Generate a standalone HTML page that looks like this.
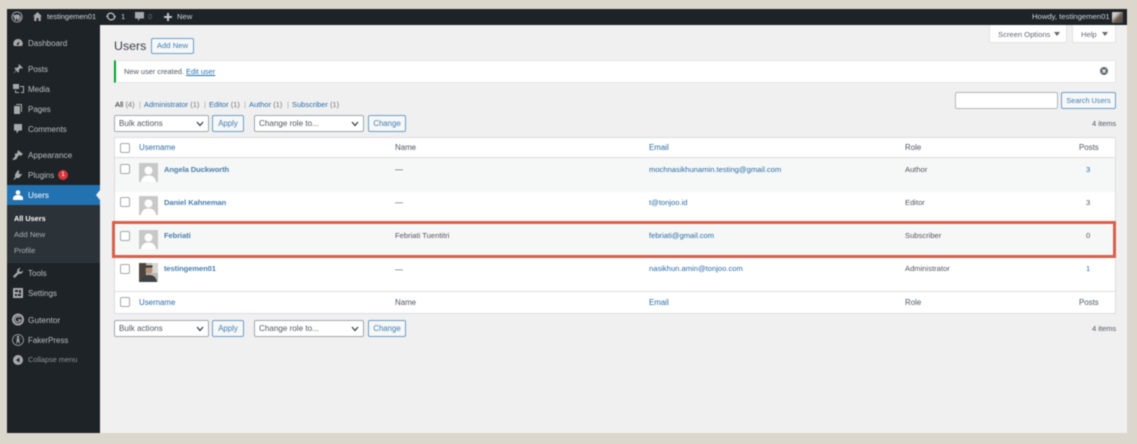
<!DOCTYPE html>
<html><head><meta charset="utf-8">
<style>
html,body{margin:0;padding:0}
body{width:1137px;height:444px;background:#dcd7cc;position:relative;overflow:hidden;font-family:"Liberation Sans",sans-serif;font-size:8px;color:#50575e}
#w{position:absolute;left:0;top:0;width:1137px;height:444px;filter:blur(.45px)}
.a{position:absolute}
.t{position:absolute;white-space:nowrap;line-height:12px}
.l{color:#2a6ea6}
.m{color:#bcbec1;font-size:8px}
.cur{color:#fff;font-weight:bold}
.s{color:#a9adb2}
.cb{position:absolute;width:8px;height:8px;border:1px solid #a5a7aa;border-radius:2px;background:#fff}
.btn{position:absolute;box-sizing:border-box;border:1px solid #6c9ec7;border-radius:2px;background:#f6f7f7;color:#3f7fb5;text-align:center;font-size:7.8px;height:17px;line-height:15px}
.sel{position:absolute;box-sizing:border-box;border:1px solid #a5a7aa;border-radius:2px;background:#fff;color:#50575e;font-size:8.1px;height:17px;line-height:15px;padding-left:4px}
.sel svg{position:absolute;right:4px;top:5px}
.av{position:absolute;width:19px;height:19px;background:#c8c8c8;overflow:hidden}
.ic{position:absolute;fill:#a7aaad}
.b{font-size:7.6px;font-weight:bold;letter-spacing:-.1px;color:#4a81ae}
.c{font-size:7.6px}
.h{font-size:7.9px}
</style></head><body><div id="w">
<!-- main -->
<div class="a" style="left:7px;top:9px;width:1120px;height:424px;background:#f0f0f1"></div>
<!-- sidebar -->
<div class="a" style="left:7px;top:25px;width:93px;height:408px;background:#1d2327"></div>
<div class="a" style="left:7px;top:185px;width:93px;height:20px;background:#2271b1"></div>
<div class="a" style="left:7px;top:205px;width:93px;height:58px;background:#2c3338"></div>
<svg class="a" style="left:96px;top:190px" width="4" height="10"><path d="M4 0L0 5L4 10Z" fill="#f0f0f1"/></svg>
<!-- admin bar -->
<div class="a" style="left:7px;top:9px;width:1120px;height:16px;background:#1d2327"></div>
<svg class="a" style="left:11px;top:11px" width="12" height="12" viewBox="0 0 12 12"><circle cx="6" cy="6" r="5.5" fill="#a7aaad"/><circle cx="6" cy="6" r="4.6" fill="#1d2327"/><path d="M2 4L4.4 10.2 5.5 7 4.4 4ZM4.5 4L7 10.4 8.8 5 8 3.6H4.5ZM9.2 4.4L8 10C9.8 9 10.6 6.5 9.2 4.4Z" fill="#a7aaad"/></svg>
<svg class="ic" style="left:33px;top:12px" width="9" height="9" viewBox="0 0 9 9"><path d="M4.5 0L9 4.4H7.8V9H5.5V6H3.5V9H1.2V4.4H0Z"/></svg>
<span class="t" style="left:47px;top:11px;color:#d5d7d9;font-size:7.5px">testingemen01</span>
<svg class="a" style="left:106px;top:12px" width="10" height="9" viewBox="0 0 10 9"><path d="M1.2 4.5A3.5 3.5 0 0 1 8 3.5M8.8 4.5A3.5 3.5 0 0 1 2 5.5" fill="none" stroke="#c3c4c7" stroke-width="1.3"/><path d="M0 4H3L1.2 6ZM10 5H7L8.8 3Z" fill="#c3c4c7"/></svg>
<span class="t" style="left:121px;top:11px;color:#d5d7d9;font-size:7.6px">1</span>
<svg class="ic" style="left:135px;top:12px" width="9" height="10" viewBox="0 0 9 10"><path d="M0 0H9V6.5H5L3 9V6.5H0Z"/></svg>
<span class="t" style="left:148px;top:11px;color:#6d7176;font-size:7.6px">0</span>
<svg class="ic" style="left:164px;top:13px" width="8" height="8" viewBox="0 0 8 8"><path d="M3 0H5V3H8V5H5V8H3V5H0V3H3Z" fill="#c3c4c7"/></svg>
<span class="t" style="left:177px;top:11px;color:#d5d7d9;font-size:7.6px">New</span>
<span class="t" style="left:1032px;top:11px;color:#d5d7d9;font-size:7.7px">Howdy, testingemen01</span>
<div class="a" style="left:1112px;top:12px;width:11px;height:11px;background:linear-gradient(135deg,#c9c9c5 30%,#6f5d50 55%,#3e4347)"></div>
<!-- sidebar icons -->
<svg class="ic" style="left:13px;top:38px" width="10" height="10" viewBox="0 0 10 10"><path d="M5 1A4.6 4.6 0 0 0 1 8H9A4.6 4.6 0 0 0 5 1ZM5 7A1 1 0 0 1 4.6 5L6.5 3 5.8 5.7A1 1 0 0 1 5 7Z"/></svg>
<span class="t m" style="left:28px;top:38px">Dashboard</span>
<svg class="ic" style="left:13px;top:64px" width="10" height="10" viewBox="0 0 10 10"><path d="M6 0L10 4 8.8 4.6 7.6 4 5.8 6 6 8 5 8.6 3.4 6.6 .5 9.5 0 9.8 3 6 1.4 4.6 2 3.6 4 3.9 6 2.2 5.4 1Z"/></svg>
<span class="t m" style="left:28px;top:64px">Posts</span>
<svg class="ic" style="left:13px;top:84px" width="11" height="10" viewBox="0 0 11 10"><path d="M0 0H6V5H0ZM7 2H11V9H8V8H10V3H7ZM2 6H3V8H6V9H2Z"/></svg>
<span class="t m" style="left:28px;top:84px">Media</span>
<svg class="ic" style="left:14px;top:104px" width="9" height="10" viewBox="0 0 9 10"><path d="M2 0H8V8H7V1H2ZM0 2H6V10H0Z"/></svg>
<span class="t m" style="left:28px;top:104px">Pages</span>
<svg class="ic" style="left:13px;top:124px" width="10" height="10" viewBox="0 0 10 10"><path d="M1 0H9V6.5H6L3.5 9.5V6.5H1Z"/></svg>
<span class="t m" style="left:28px;top:124px">Comments</span>
<svg class="ic" style="left:12px;top:150px" width="11" height="10" viewBox="0 0 11 10"><path d="M6 0L11 4 8.5 6 7 5 4 9.5 0 10 3 6.5 3 3.5 5 3.5Z"/></svg>
<span class="t m" style="left:28px;top:150px;font-size:8.2px">Appearance</span>
<svg class="ic" style="left:13px;top:170px" width="10" height="10" viewBox="0 0 10 10"><path d="M5 0L6.5 1.5 5.5 3 7 4.5 8.5 3.5 9 4.5 6 8H3L1.5 9.8 .5 9 2 7.3V4.5Z"/></svg>
<span class="t m" style="left:28px;top:170px">Plugins</span>
<div class="a" style="left:58px;top:170px;width:10px;height:10px;border-radius:50%;background:#d63638;color:#fff;font-size:6.5px;line-height:10px;text-align:center">1</div>
<svg class="a" style="left:13px;top:190px" width="10" height="10" viewBox="0 0 10 10"><circle cx="5" cy="2.5" r="2.3" fill="#fff"/><path d="M0 10V7.5C1 5.5 3 5 5 5S9 5.5 10 7.5V10Z" fill="#fff"/></svg>
<span class="t" style="left:28px;top:190px;color:#fff;font-size:8px">Users</span>
<span class="t cur" style="left:14px;top:213px;font-size:7.3px">All Users</span>
<span class="t s" style="left:14px;top:229px;font-size:7.7px">Add New</span>
<span class="t s" style="left:14px;top:245px;font-size:7.5px">Profile</span>
<svg class="ic" style="left:13px;top:268px" width="10" height="10" viewBox="0 0 10 10"><path d="M7 0A3 3 0 0 0 4.3 4L0 8.3 1.5 10 5.9 5.6A3 3 0 0 0 10 2.5L8.2 4 6.3 3.4 6 1.8 7.8 .2Z"/></svg>
<span class="t m" style="left:28px;top:268px">Tools</span>
<svg class="ic" style="left:13px;top:288px" width="10" height="10" viewBox="0 0 10 10"><path fill-rule="evenodd" d="M0 0H10V10H0ZM2 2V4H5V2ZM6 2V5H8V2ZM2 6V8H4V6ZM5 6V8H8V6Z"/></svg>
<span class="t m" style="left:28px;top:288px">Settings</span>
<svg class="a" style="left:12px;top:313px" width="12" height="13" viewBox="0 0 12 13"><circle cx="6" cy="6.5" r="5" fill="none" stroke="#a7aaad" stroke-width="2"/><path d="M8 4.5A2.8 2.8 0 1 0 8.6 7H6" fill="none" stroke="#a7aaad" stroke-width="1.2"/></svg>
<span class="t m" style="left:28px;top:314px;font-size:8.3px">Gutentor</span>
<svg class="a" style="left:12px;top:334px" width="12" height="12" viewBox="0 0 12 12"><circle cx="6" cy="6" r="5.5" fill="none" stroke="#a7aaad" stroke-width=".8"/><circle cx="6" cy="3" r="1.2" fill="#a7aaad"/><path d="M2 4.5L5 5 4 10.5 6 7.5 8 10.5 7 5 10 4.5" fill="#a7aaad"/></svg>
<span class="t m" style="left:28px;top:335px;font-size:7.9px">FakerPress</span>
<svg class="a" style="left:13px;top:355px" width="10" height="10" viewBox="0 0 10 10"><circle cx="5" cy="5" r="5" fill="#a7aaad"/><path d="M6.5 2.5V7.5L3 5Z" fill="#1d2327"/></svg>
<span class="t" style="left:28px;top:354px;color:#8e9397;font-size:7.4px">Collapse menu</span>
<!-- top tabs -->
<div class="a" style="left:989px;top:25px;width:78px;height:18px;background:#fff;border:1px solid #e2e2e4;border-top:0;box-sizing:border-box"></div>
<span class="t" style="left:998px;top:29px;color:#646970;font-size:7.6px">Screen Options</span>
<svg class="a" style="left:1054px;top:32px" width="6" height="4"><path d="M0 0H6L3 4Z" fill="#646970"/></svg>
<div class="a" style="left:1072px;top:25px;width:44px;height:18px;background:#fff;border:1px solid #e2e2e4;border-top:0;box-sizing:border-box"></div>
<span class="t" style="left:1081px;top:29px;color:#646970;font-size:7.6px">Help</span>
<svg class="a" style="left:1102px;top:32px" width="6" height="4"><path d="M0 0H6L3 4Z" fill="#646970"/></svg>
<!-- heading -->
<span class="t" style="left:114px;top:39px;font-size:12.4px;line-height:15px;color:#3a4046">Users</span>
<div class="btn" style="left:151px;top:38px;width:43px;height:16px;line-height:14px;font-size:7.7px">Add New</div>
<!-- notice -->
<div class="a" style="left:114px;top:60px;width:1002px;height:23px;background:#fff;border:1px solid #e4e4e6;border-left:2px solid #00a32a;box-sizing:border-box"></div>
<span class="t" style="left:124px;top:66px;font-size:7.4px">New user created. <span style="color:#2271b1;text-decoration:underline">Edit user</span></span>
<svg class="a" style="left:1100px;top:67px" width="8" height="8" viewBox="0 0 8 8"><circle cx="4" cy="4" r="4" fill="#646970"/><path d="M2.4 2.4L5.6 5.6M5.6 2.4L2.4 5.6" stroke="#fff" stroke-width="1"/></svg>
<!-- filters -->
<span class="t" style="left:115px;top:99px;font-size:7.5px"><span style="color:#1d2327">All</span> <span style="color:#777">(4)</span></span>
<span class="t" style="left:139px;top:99px;color:#aaa;font-size:7.5px">|</span>
<span class="t l" style="left:144px;top:99px;font-size:7.5px">Administrator <span style="color:#777">(1)</span></span>
<span class="t" style="left:204px;top:99px;color:#aaa;font-size:7.5px">|</span>
<span class="t l" style="left:209px;top:99px;font-size:7.5px">Editor <span style="color:#777">(1)</span></span>
<span class="t" style="left:244px;top:99px;color:#aaa;font-size:7.5px">|</span>
<span class="t l" style="left:249px;top:99px;font-size:7.5px">Author <span style="color:#777">(1)</span></span>
<span class="t" style="left:287px;top:99px;color:#aaa;font-size:7.5px">|</span>
<span class="t l" style="left:292px;top:99px;font-size:7.5px">Subscriber <span style="color:#777">(1)</span></span>
<!-- search -->
<div class="a" style="left:955px;top:92px;width:103px;height:17px;box-sizing:border-box;background:#fff;border:1px solid #b5b7ba;border-radius:2px"></div>
<div class="btn" style="left:1061px;top:92px;width:55px;font-size:7.3px">Search Users</div>
<span class="t" style="left:1092px;top:117.5px;font-size:7.5px">4 items</span>
<!-- top actions -->
<div class="sel" style="left:114px;top:115px;width:95px">Bulk actions<svg width="8" height="6" viewBox="0 0 8 6"><path d="M1 1L4 4.5L7 1" fill="none" stroke="#3c434a" stroke-width="1.3"/></svg></div>
<div class="btn" style="left:212px;top:115px;width:32px">Apply</div>
<div class="sel" style="left:254px;top:115px;width:110px">Change role to...<svg width="8" height="6" viewBox="0 0 8 6"><path d="M1 1L4 4.5L7 1" fill="none" stroke="#3c434a" stroke-width="1.3"/></svg></div>
<div class="btn" style="left:368px;top:115px;width:38px">Change</div>
<!-- table -->
<div class="a" style="left:114px;top:137px;width:1002px;height:177px;box-sizing:border-box;background:#fff;border:1px solid #dcdde0"></div>
<div class="a" style="left:115px;top:157px;width:1000px;height:1px;background:#dcdde0"></div>
<div class="a" style="left:115px;top:158px;width:1000px;height:34px;background:#f6f7f7"></div>
<div class="a" style="left:115px;top:225px;width:1000px;height:33px;background:#f6f7f7"></div>
<div class="a" style="left:115px;top:291px;width:1000px;height:1px;background:#dcdde0"></div>
<!-- header -->
<div class="cb" style="left:120px;top:143px"></div>
<span class="t l h" style="left:139px;top:142px">Username</span>
<span class="t h" style="left:395px;top:142px">Name</span>
<span class="t l h" style="left:649px;top:142px">Email</span>
<span class="t h" style="left:905px;top:142px">Role</span>
<span class="t h" style="left:1079px;top:142px">Posts</span>
<!-- rows -->
<div class="cb" style="left:120px;top:164px"></div>
<div class="av" style="left:139px;top:163px"><svg width="19" height="19"><circle cx="9.5" cy="7.5" r="4" fill="#fff"/><path d="M2 19C3 13 7 12.5 9.5 12.5S16 13 17 19Z" fill="#fff"/></svg></div>
<span class="t l b" style="left:164px;top:163.5px">Angela Duckworth</span>
<span class="t" style="left:395px;top:164px;font-size:8px">—</span>
<span class="t l c" style="left:649px;top:163.5px">mochnasikhunamin.testing@gmail.com</span>
<span class="t c" style="left:905px;top:163.5px">Author</span>
<span class="t l c" style="left:1086px;top:163.5px">3</span>

<div class="cb" style="left:120px;top:197px"></div>
<div class="av" style="left:139px;top:196px"><svg width="19" height="19"><circle cx="9.5" cy="7.5" r="4" fill="#fff"/><path d="M2 19C3 13 7 12.5 9.5 12.5S16 13 17 19Z" fill="#fff"/></svg></div>
<span class="t l b" style="left:164px;top:196.5px">Daniel Kahneman</span>
<span class="t" style="left:395px;top:197px;font-size:8px">—</span>
<span class="t l c" style="left:649px;top:196.5px">t@tonjoo.id</span>
<span class="t c" style="left:905px;top:196.5px">Editor</span>
<span class="t c" style="left:1086px;top:196.5px">3</span>

<div class="cb" style="left:120px;top:231px"></div>
<div class="av" style="left:139px;top:230px"><svg width="19" height="19"><circle cx="9.5" cy="7.5" r="4" fill="#fff"/><path d="M2 19C3 13 7 12.5 9.5 12.5S16 13 17 19Z" fill="#fff"/></svg></div>
<span class="t l b" style="left:164px;top:230px">Febriati</span>
<span class="t c" style="left:395px;top:230px">Febriati Tuentitri</span>
<span class="t l c" style="left:649px;top:230px">febriati@gmail.com</span>
<span class="t c" style="left:905px;top:230px">Subscriber</span>
<span class="t c" style="left:1086px;top:230px">0</span>

<div class="cb" style="left:120px;top:264px"></div>
<div class="av" style="left:139px;top:263px;background:#b9b5ae"><svg width="19" height="19"><rect width="7" height="19" fill="#4a4541"/><rect x="13" width="6" height="10" fill="#d8d6d0"/><circle cx="10" cy="7" r="3.6" fill="#b58f77"/><rect x="6.5" y="2.5" width="7" height="2" fill="#3a3633"/><path d="M2 19C3 13 7 12 10 12S17 13 18 19Z" fill="#3d4044"/></svg></div>
<span class="t l b" style="left:164px;top:263px">testingemen01</span>
<span class="t" style="left:395px;top:263.5px;font-size:8px">—</span>
<span class="t l c" style="left:649px;top:263px">nasikhun.amin@tonjoo.com</span>
<span class="t c" style="left:905px;top:263px">Administrator</span>
<span class="t l c" style="left:1086px;top:263px">1</span>
<!-- footer -->
<div class="cb" style="left:120px;top:297px"></div>
<span class="t l h" style="left:139px;top:297px">Username</span>
<span class="t h" style="left:395px;top:297px">Name</span>
<span class="t l h" style="left:649px;top:297px">Email</span>
<span class="t h" style="left:905px;top:297px">Role</span>
<span class="t h" style="left:1079px;top:297px">Posts</span>
<!-- highlight -->
<div class="a" style="left:112px;top:221px;width:1004px;height:37px;box-sizing:border-box;border:3.5px solid #d8604a"></div>
<!-- bottom actions -->
<div class="sel" style="left:114px;top:320px;width:95px">Bulk actions<svg width="8" height="6" viewBox="0 0 8 6"><path d="M1 1L4 4.5L7 1" fill="none" stroke="#3c434a" stroke-width="1.3"/></svg></div>
<div class="btn" style="left:212px;top:320px;width:32px">Apply</div>
<div class="sel" style="left:254px;top:320px;width:110px">Change role to...<svg width="8" height="6" viewBox="0 0 8 6"><path d="M1 1L4 4.5L7 1" fill="none" stroke="#3c434a" stroke-width="1.3"/></svg></div>
<div class="btn" style="left:368px;top:320px;width:38px">Change</div>
<span class="t" style="left:1092px;top:322.5px;font-size:7.5px">4 items</span>
</div></body></html>
